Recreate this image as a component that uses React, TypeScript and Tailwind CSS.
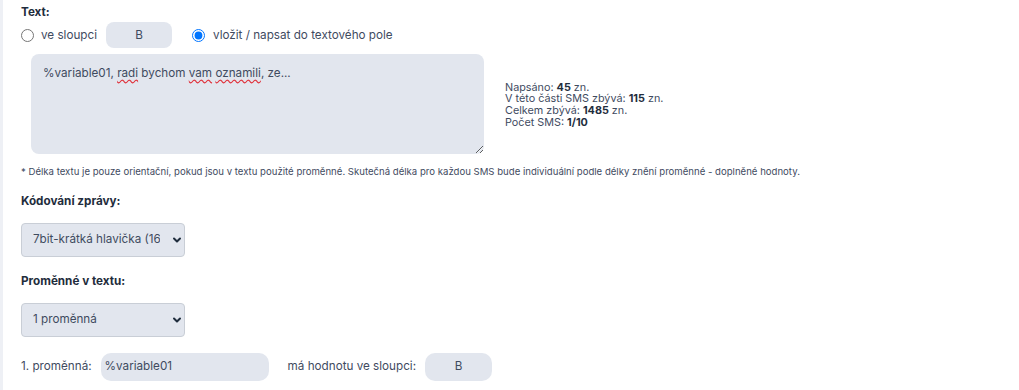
import { ChevronDown } from "lucide-react";

const label = "text-[11.7px] leading-[16px] font-bold text-[#1f2d3d]";
const body = "text-[11.7px] text-[#3f4b5f]";

function Select({ value }: { value: string }) {
  return (
    <div className="flex h-[34px] w-[164px] items-center rounded-[4px] border border-[#c9ced6] bg-[#e2e6ee]">
      <select
        defaultValue={value}
        className="h-full w-[138px] appearance-none bg-transparent pl-[11px] text-[11.7px] text-[#3f4b5f] outline-none"
      >
        <option>{value}</option>
      </select>
      <ChevronDown className="ml-[11px] h-[12px] w-[12px] text-[#1f2d3d]" strokeWidth={4} />
    </div>
  );
}

export default function App() {
  return (
    <div
      className="min-h-[390px] w-[1019px] border-l-[3px] border-[#eef0f5] bg-white pl-[18px] pt-[4px]"
      style={{ fontFamily: "Inter, 'Noto Sans', sans-serif" }}
    >
      <div className={label}>Text:</div>

      <div className="mt-[2px] flex h-[26px] items-center">
        <label className={`flex items-center gap-[7px] pt-[2px] ${body}`}>
          <input type="radio" name="src" className="m-0 h-[13px] w-[13px]" />
          ve sloupci
        </label>
        <div className="ml-[9px] flex h-[26px] w-[66px] items-center justify-center rounded-[8px] bg-[#e2e6ee] pt-[1px] text-[11.7px] text-[#3f4b5f]">
          B
        </div>
        <label className={`ml-[20px] flex items-center gap-[8px] pt-[2px] ${body}`}>
          <input type="radio" name="src" defaultChecked className="m-0 h-[13px] w-[13px]" />
          vložit / napsat do textového pole
        </label>
      </div>

      <div className="mt-[6px] flex items-center">
        <div className="ml-[10px] h-[100px] w-[453px] resize overflow-auto rounded-[8px] bg-[#e2e6ee] px-[12px] pt-[11px] text-[11.7px] text-[#3f4b5f]">
          %variable01,{" "}
          <span className="underline decoration-[#e0303a] decoration-wavy underline-offset-2">radi</span> bychom{" "}
          <span className="underline decoration-[#e0303a] decoration-wavy underline-offset-2">vam</span>{" "}
          <span className="underline decoration-[#e0303a] decoration-wavy underline-offset-2">oznamili</span>, ze...
        </div>
        <div className="ml-[21px] mt-[2px] text-[10.8px] leading-[11.7px] text-[#3f4b5f]">
          <div>
            Napsáno: <b className="text-[#1f2d3d]">45</b> zn.
          </div>
          <div>
            V této části SMS zbývá: <b className="text-[#1f2d3d]">115</b> zn.
          </div>
          <div>
            Celkem zbývá: <b className="text-[#1f2d3d]">1485</b> zn.
          </div>
          <div>
            Počet SMS: <b className="text-[#1f2d3d]">1/10</b>
          </div>
        </div>
      </div>

      <p className="mt-[11px] text-[9.6px] leading-[14px] text-[#3f4b5f]">
        * Délka textu je pouze orientační, pokud jsou v textu použité proměnné. Skutečná délka pro každou SMS bude
        individuální podle délky znění proměnné - doplněné hodnoty.
      </p>

      <div className={`mt-[14px] ${label}`}>Kódování zprávy:</div>
      <div className="mt-[14px]">
        <Select value="7bit-krátká hlavička (160 zn.)" />
      </div>

      <div className={`mt-[16px] ${label}`}>Proměnné v textu:</div>
      <div className="mt-[14px]">
        <Select value="1 proměnná" />
      </div>

      <div className="mt-[16px] flex items-center">
        <span className={body}>1. proměnná:</span>
        <div className="ml-[9px] flex h-[28px] w-[168px] items-center rounded-[10px] bg-[#e2e6ee] px-[4px] text-[11.7px] text-[#3f4b5f]">
          %variable01
        </div>
        <span className={`ml-[19px] ${body}`}>má hodnotu ve sloupci:</span>
        <div className="ml-[9px] flex h-[28px] w-[67px] items-center justify-center rounded-[10px] bg-[#e2e6ee] text-[11.7px] text-[#3f4b5f]">
          B
        </div>
      </div>
    </div>
  );
}
